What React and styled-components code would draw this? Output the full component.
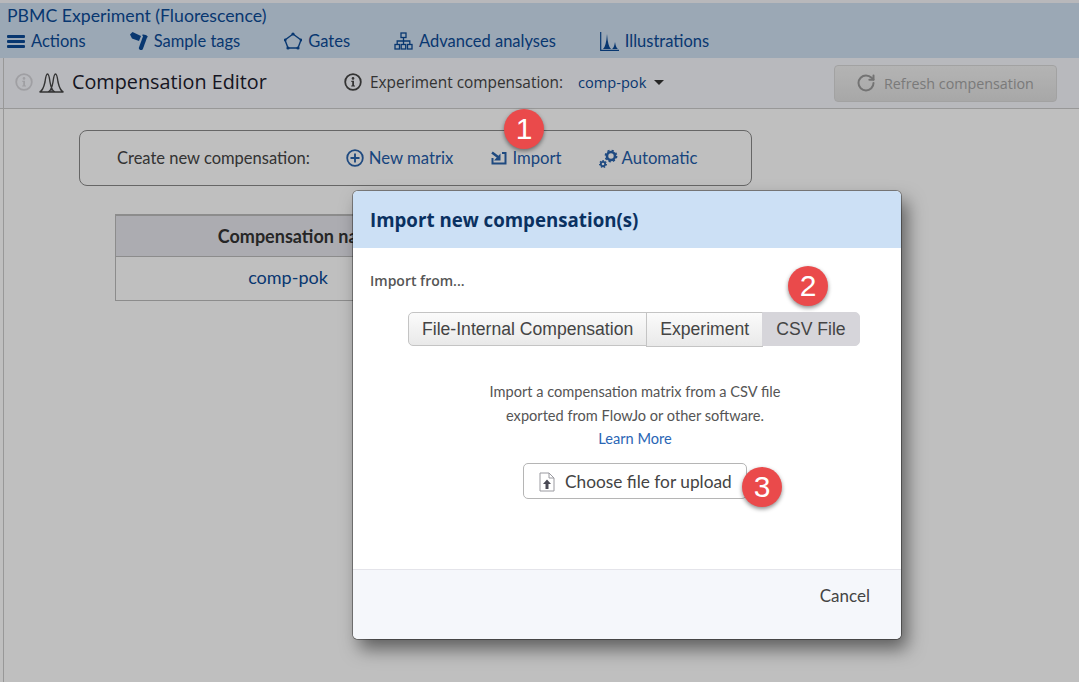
import React from 'react';
import styled, { createGlobalStyle } from 'styled-components';
import { RotateCw } from 'lucide-react';

const GlobalStyle = createGlobalStyle`
    html, body {
        margin: 0;
        padding: 0;
        height: 100%;
        background: #fff;
        overflow: hidden;
    }
    * {
        box-sizing: border-box;
    }
`

const Page = styled.div`
    position: relative;
    width: 1079px;
    height: 682px;
    overflow: hidden;
    font-family: Lato, sans-serif;
    padding-top: 3px;
    background: #f6f6fa;
    display: flex;
    flex-direction: column;
`

const Header = styled.header`
    height: 55px;
    background: #cfe0f2;
    padding: 2px 0 0 7px;
`

const ExperimentTitle = styled.div`
    font-size: 17.7px;
    line-height: 21px;
    color: #0b4a96;
`

const Nav = styled.nav`
    display: flex;
    gap: 44px;
    margin-top: 3px;
    height: 24px;
    align-items: center;
`

const NavItem = styled.a`
    display: flex;
    align-items: center;
    gap: 6px;
    font-size: 16.5px;
    color: #0b4a96;
    white-space: nowrap;
    & svg {
        display: block;
    }
`

const Workspace = styled.div`
    position: relative;
    flex: 1;
    display: flex;
    flex-direction: column;
    background: #fff;
    &::before {
        content: '';
        position: absolute;
        left: 3px;
        top: 0;
        bottom: 0;
        width: 1px;
        background: #cbcbcb;
    }
`

const SubBar = styled.div`
    height: 51px;
    background: #f6f7fc;
    border-bottom: 1px solid #cbcbcb;
    display: flex;
    align-items: center;
    padding-bottom: 2px;
`

const TitleGroup = styled.div`
    display: flex;
    align-items: center;
    gap: 6px;
    width: 344px;
    padding-left: 15px;
`

const EditorTitle = styled.h1`
    margin: -2px 0 0 2px;
    font-family: 'Open Sans', sans-serif;
    font-weight: 400;
    font-size: 19.8px;
    color: #1c1c2e;
    white-space: nowrap;
`

const CompGroup = styled.div`
    display: flex;
    align-items: center;
    width: 490px;
`

const CompLabel = styled.span`
    margin-left: 8px;
    font-family: 'Open Sans', sans-serif;
    font-size: 15.4px;
    color: #444;
    white-space: nowrap;
`

const CompValue = styled.span`
    margin-left: 15px;
    font-family: 'Open Sans', sans-serif;
    font-size: 14.6px;
    color: #0b4a96;
    white-space: nowrap;
`

const Caret = styled.span`
    margin-left: 8px;
    width: 0;
    height: 0;
    border-left: 5px solid transparent;
    border-right: 5px solid transparent;
    border-top: 5px solid #333;
`

const RefreshButton = styled.button`
    width: 223px;
    height: 37px;
    margin-top: 2px;
    border: 1px solid #d9d9d9;
    border-radius: 4px;
    background: linear-gradient(#f0f0f0, #e0e0e0);
    display: flex;
    align-items: center;
    padding: 0 0 0 21px;
    gap: 8px;
    font-family: 'Open Sans', sans-serif;
    font-size: 14.3px;
    color: #a3a3a3;
    white-space: nowrap;
`

const Content = styled.main`
    flex: 1;
    padding: 21px 0 0 79px;
`

const CreateBox = styled.div`
    width: 673px;
    height: 56px;
    border: 1px solid #888;
    border-radius: 8px;
    display: flex;
    align-items: center;
    padding: 0 0 0 37px;
`

const CreateLabel = styled.span`
    font-size: 16.5px;
    color: #444;
    margin-right: 36px;
    white-space: nowrap;
`

const CreateAction = styled.a`
    display: flex;
    align-items: center;
    gap: ${p => p.$gap || 5}px;
    margin-right: ${p => p.$after || 0}px;
    font-size: 16.7px;
    color: #1f5ca8;
    white-space: nowrap;
`

const Table = styled.table`
    margin: 28px 0 0 36px;
    width: 346px;
    border-collapse: collapse;
    font-size: 18px;
    & th {
        height: 41px;
        padding: 0 0 0 24px;
        background: #e6e6ed;
        border: 1px solid #bbb;
        border-top-width: 2px;
        font-weight: 700;
        color: #333;
        white-space: nowrap;
    }
    & td {
        height: 44px;
        padding: 0 0 2px;
        border: 1px solid #bbb;
        text-align: center;
        color: #0b4a96;
    }
`

const Overlay = styled.div`
    position: absolute;
    inset: 0;
    background: rgba(0, 0, 0, 0.25);
`

const Modal = styled.section`
    position: absolute;
    left: 353px;
    top: 191px;
    width: 548px;
    height: 448px;
    background: #fff;
    border-radius: 5px;
    box-shadow: 0 0 0 1px rgba(0, 0, 0, 0.35), 6px 10px 18px rgba(0, 0, 0, 0.5);
    display: flex;
    flex-direction: column;
    overflow: hidden;
`

const ModalHeader = styled.div`
    height: 57px;
    background: #cce0f5;
    display: flex;
    align-items: center;
    padding-left: 17px;
    font-family: 'Open Sans', sans-serif;
    font-weight: 700;
    font-size: 18.7px;
    color: #0a3161;
`

const ModalBody = styled.div`
    flex: 1;
    padding: 24px 17px 0;
`

const ImportFrom = styled.div`
    font-family: 'Open Sans', sans-serif;
    font-weight: 600;
    font-size: 14px;
    line-height: 18px;
    color: #555;
`

const Tabs = styled.div`
    display: flex;
    align-items: flex-start;
    margin: 22px 0 0 38px;
`

const Tab = styled.button`
    height: 34px;
    padding: 0 13px;
    border: 1px solid #c4c4c4;
    margin-left: -1px;
    font-family: 'Liberation Sans', sans-serif;
    font-size: 17.6px;
    color: #444;
    background: ${p => (p.$active ? '#d6d5da' : 'linear-gradient(#fbfbfb, #e9e9e9)')};
    border-color: ${p => (p.$active ? '#d6d5da' : '#c4c4c4')};
    white-space: nowrap;
    &:first-child {
        border-radius: 5px 0 0 5px;
        margin-left: 0;
    }
    &:nth-child(2) {
        height: 35px;
    }
    &:last-child {
        border-radius: 0 5px 5px 0;
    }
`

const Description = styled.p`
    margin: 33px 0 0 16px;
    text-align: center;
    font-size: 14.6px;
    line-height: 23.5px;
    color: #555;
`

const LearnMore = styled.a`
    display: block;
    color: #2a66b5;
`

const UploadRow = styled.div`
    display: flex;
    margin: 12px 0 0 153px;
`

const UploadButton = styled.button`
    width: 224px;
    height: 36px;
    border: 1px solid #b5b5b5;
    border-radius: 5px;
    background: #fff;
    display: flex;
    align-items: center;
    gap: 10px;
    padding: 2px 0 0 15px;
    font-family: Lato, sans-serif;
    font-size: 17.3px;
    color: #444;
    white-space: nowrap;
`

const ModalFooter = styled.div`
    height: 70px;
    background: #f5f7fb;
    border-top: 1px solid #e4e4ea;
    padding: 15px 31px 0 0;
    text-align: right;
    font-size: 17px;
    color: #444;
`

const Badge = styled.div`
    position: absolute;
    left: ${p => p.$x}px;
    top: ${p => p.$y}px;
    width: 40px;
    height: 40px;
    border-radius: 50%;
    background: #ea4a4b;
    box-shadow: 0 2px 4px rgba(0, 0, 0, 0.45);
    color: #fff;
    font-family: 'Liberation Sans', sans-serif;
    font-size: 30px;
    display: flex;
    align-items: center;
    justify-content: center;
`

const NAVY = '#0b4a96'
const BLUE = '#2a63ab'

const BarsIcon = () => (
    <svg width="18" height="14" viewBox="0 0 18 14">
        <g fill={NAVY}>
            <rect x="0" y="1" width="18" height="3" rx="1" />
            <rect x="0" y="6" width="18" height="3" rx="1" />
            <rect x="0" y="11" width="18" height="3" rx="1" />
        </g>
    </svg>
)

const TagsIcon = () => (
    <svg width="18" height="18" viewBox="0 0 18 18">
        <path d="M0 2.5 L2.5 0 L11 4 L9 9 L2 6.5 Z" fill={NAVY} />
        <path d="M15 5 L11 16" stroke={NAVY} strokeWidth="4.2" strokeLinecap="round" />
        <path d="M12.5 3 L17.5 4.8" stroke={NAVY} strokeWidth="1.4" />
    </svg>
)

const GatesIcon = () => (
    <svg width="18" height="18" viewBox="0 0 18 18">
        <path d="M9 2 L17 8 L14 16 L4 16 L1 8 Z" fill="none" stroke={NAVY} strokeWidth="1.4" />
        <g fill={NAVY}>
            <circle cx="9" cy="2" r="1.6" />
            <circle cx="17" cy="8" r="1.4" />
            <circle cx="14" cy="16" r="1.6" />
            <circle cx="4" cy="16" r="1.6" />
            <circle cx="1.2" cy="8" r="1.4" />
        </g>
    </svg>
)

const TreeIcon = () => (
    <svg width="19" height="18" viewBox="0 0 19 18">
        <g fill="none" stroke={NAVY} strokeWidth="1.3">
            <rect x="7" y="1" width="5" height="4.5" />
            <rect x="1" y="12.5" width="4.5" height="4.5" />
            <rect x="7.2" y="12.5" width="4.5" height="4.5" />
            <rect x="13.5" y="12.5" width="4.5" height="4.5" />
            <path d="M9.5 5.5 V12.5 M3.2 12.5 V9 H15.8 V12.5" />
        </g>
    </svg>
)

const PeaksIcon = () => (
    <svg width="19" height="19" viewBox="0 0 19 19">
        <path d="M0.7 0 V18.3 H19" fill="none" stroke={NAVY} strokeWidth="1.2" />
        <path d="M3 17 Q6 15 7 2 Q8 15 11 17 Z M12 17 Q14 16 15 10 Q16 16 18 17 Z" fill={NAVY} />
    </svg>
)

const InfoIcon = ({ color, size = 18 }) => (
    <svg width={size} height={size} viewBox="0 0 18 18">
        <circle cx="9" cy="9" r="7.8" fill="none" stroke={color} strokeWidth="1.8" />
        <circle cx="9" cy="5.4" r="1.3" fill={color} />
        <path d="M7.3 7.8 H10 V12.4 H11 V13.6 H7.2 V12.4 H8.2 V9 H7.3 Z" fill={color} />
    </svg>
)

const DoublePeakIcon = () => (
    <svg width="25" height="21" viewBox="0 0 25 21">
        <path d="M9 20 Q11.5 17.5 12.5 14 Q13.5 17.5 16 20 Z" fill="#8e8e96" />
        <path
            d="M0.5 20 Q4 19 6 10 Q7 2 8.5 2 Q10 2 11 10 Q12.5 19 16 20 M9 20 Q12.5 19 14 10 Q15 2 16.5 2 Q18 2 19 10 Q21 19 24.5 20 M0.5 20 H24.5"
            fill="none"
            stroke="#444"
            strokeWidth="1.4"
        />
    </svg>
)

const PlusCircleIcon = () => (
    <svg width="18" height="18" viewBox="0 0 18 18">
        <circle cx="9" cy="9" r="7.8" fill="none" stroke={BLUE} strokeWidth="1.8" />
        <path d="M9 4.5 V13.5 M4.5 9 H13.5" stroke={BLUE} strokeWidth="1.9" />
    </svg>
)

const ImportIcon = () => (
    <svg width="16" height="14" viewBox="0 0 16 14">
        <path d="M1.5 7 V12.5 H14.5 V2 H11" fill="none" stroke={BLUE} strokeWidth="2" />
        <path d="M1 1.5 L7 6" stroke={BLUE} strokeWidth="2.5" />
        <path d="M9.5 2.5 V9.5 H3 Z" fill={BLUE} />
    </svg>
)

const GearsIcon = () => (
    <svg width="19" height="19" viewBox="0 0 19 19">
        <g fill="none" stroke={BLUE}>
            <circle cx="12" cy="7" r="4" strokeWidth="2.6" />
            <circle cx="12" cy="7" r="5.6" strokeWidth="1.6" strokeDasharray="2.2 2.2" />
            <circle cx="4" cy="15" r="2.2" strokeWidth="1.8" />
            <circle cx="4" cy="15" r="3.4" strokeWidth="1.2" strokeDasharray="1.5 1.5" />
        </g>
    </svg>
)

const UploadFileIcon = () => (
    <svg width="16" height="20" viewBox="0 0 16 20">
        <path d="M1 1 H10 L15 6 V19 H1 Z M10 1 V6 H15" fill="none" stroke="#9a9aa0" strokeWidth="1" />
        <path d="M8 7.5 L12 12 H9.5 V17 H6.5 V12 H4 Z" fill="#4a4a55" />
    </svg>
)

const navItems = [
    { label: 'Actions', Icon: BarsIcon },
    { label: 'Sample tags', Icon: TagsIcon },
    { label: 'Gates', Icon: GatesIcon },
    { label: 'Advanced analyses', Icon: TreeIcon },
    { label: 'Illustrations', Icon: PeaksIcon },
]

const App = () => (
    <Page>
        <GlobalStyle />
        <Header>
            <ExperimentTitle>PBMC Experiment (Fluorescence)</ExperimentTitle>
            <Nav>
                {navItems.map(({ label, Icon }) => (
                    <NavItem key={label}>
                        <Icon />
                        {label}
                    </NavItem>
                ))}
            </Nav>
        </Header>
        <Workspace>
            <SubBar>
                <TitleGroup>
                    <InfoIcon color="#d5d5da" />
                    <DoublePeakIcon />
                    <EditorTitle>Compensation Editor</EditorTitle>
                </TitleGroup>
                <CompGroup>
                    <InfoIcon color="#444" />
                    <CompLabel>Experiment compensation:</CompLabel>
                    <CompValue>comp-pok</CompValue>
                    <Caret />
                </CompGroup>
                <RefreshButton>
                    <RotateCw size={20} color="#9a9a9a" strokeWidth={2.4} />
                    Refresh compensation
                </RefreshButton>
            </SubBar>
            <Content>
                <CreateBox>
                    <CreateLabel>Create new compensation:</CreateLabel>
                    <CreateAction $after={38}>
                        <PlusCircleIcon />
                        New matrix
                    </CreateAction>
                    <CreateAction $after={37}>
                        <ImportIcon />
                        Import
                    </CreateAction>
                    <CreateAction $gap={4}>
                        <GearsIcon />
                        Automatic
                    </CreateAction>
                </CreateBox>
                <Table>
                    <thead>
                        <tr>
                            <th>Compensation name</th>
                        </tr>
                    </thead>
                    <tbody>
                        <tr>
                            <td>comp-pok</td>
                        </tr>
                    </tbody>
                </Table>
            </Content>
        </Workspace>
        <Overlay />
        <Modal>
            <ModalHeader>Import new compensation(s)</ModalHeader>
            <ModalBody>
                <ImportFrom>Import from...</ImportFrom>
                <Tabs>
                    <Tab>File-Internal Compensation</Tab>
                    <Tab>Experiment</Tab>
                    <Tab $active>CSV File</Tab>
                </Tabs>
                <Description>
                    Import a compensation matrix from a CSV file
                    <br />
                    exported from FlowJo or other software.
                    <LearnMore>Learn More</LearnMore>
                </Description>
                <UploadRow>
                    <UploadButton>
                        <UploadFileIcon />
                        Choose file for upload
                    </UploadButton>
                </UploadRow>
            </ModalBody>
            <ModalFooter>Cancel</ModalFooter>
        </Modal>
        <Badge $x={504} $y={109}>1</Badge>
        <Badge $x={788} $y={266}>2</Badge>
        <Badge $x={742} $y={467}>3</Badge>
    </Page>
)

export default App
